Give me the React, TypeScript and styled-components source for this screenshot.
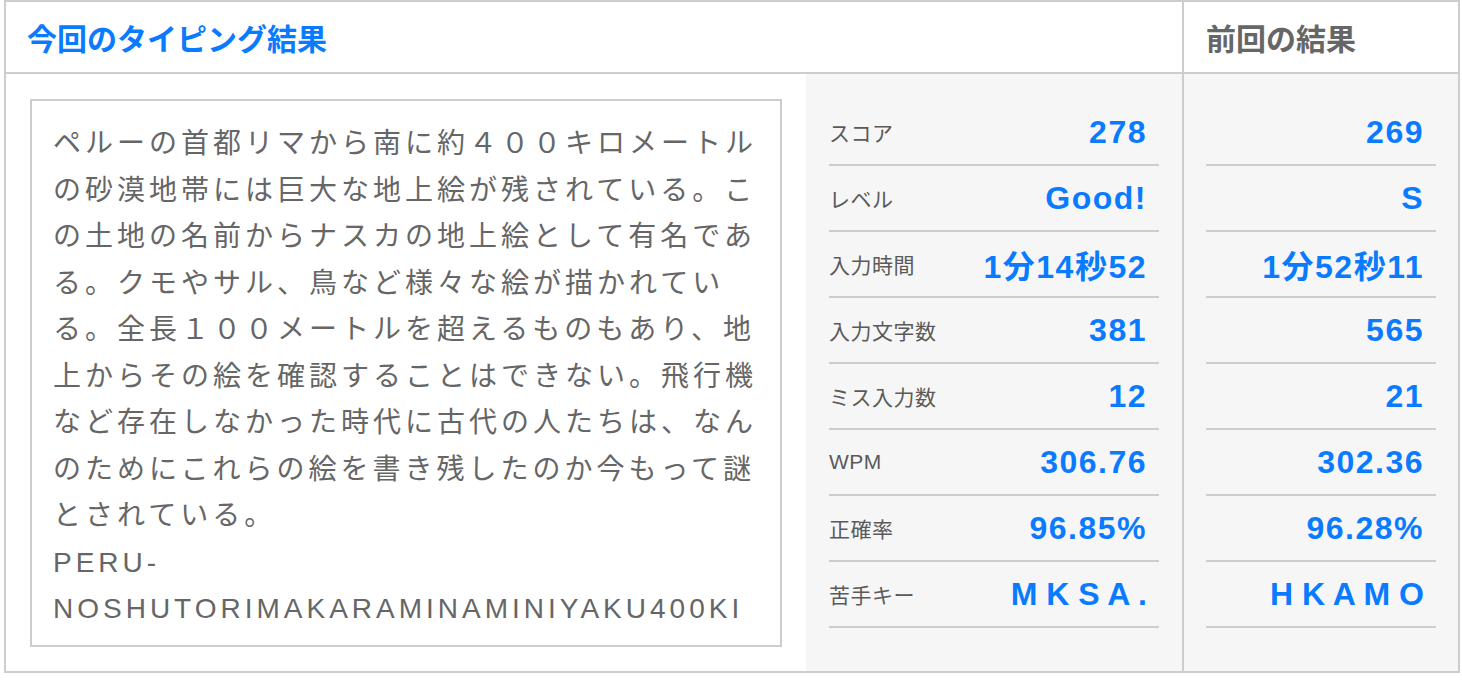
import React from "react";
import styled, { createGlobalStyle } from "styled-components";

const GlobalStyle = createGlobalStyle`
  html, body {
    margin: 0;
    padding: 0;
    background: #ffffff;
  }
  body {
    font-family: "Liberation Sans", "Noto Sans CJK JP", sans-serif;
  }
`;

const LINE = "#cdcdcd";
const BLUE = "#0a7bff";
const PANEL = "#f6f6f6";

const Frame = styled.div`
  box-sizing: border-box;
  width: 1456px;
  margin-left: 4px;
  border: 2px solid ${LINE};
  display: grid;
  grid-template-columns: 1178px 274px;
  grid-template-rows: 72px 597px;
`;

const HeaderCell = styled.div<{ $muted?: boolean; $divider?: boolean }>`
  display: flex;
  align-items: center;
  padding-left: ${(p) => (p.$muted ? 22 : 21)}px;
  border-bottom: 2px solid ${LINE};
  border-right: ${(p) => (p.$divider ? `2px solid ${LINE}` : "none")};
  font-family: "Noto Sans CJK JP", sans-serif;
  font-weight: 700;
  font-size: 30px;
  color: ${(p) => (p.$muted ? "#666666" : BLUE)};
`;

const BodyLeft = styled.div`
  display: flex;
  min-width: 0;
  border-right: 2px solid ${LINE};
`;

const TextPane = styled.div`
  flex: none;
  width: 800px;
  min-width: 0;
  box-sizing: border-box;
  padding: 25px 24px 24px 24px;
  background: #ffffff;
`;

const TextBox = styled.div`
  box-sizing: border-box;
  width: 752px;
  height: 548px;
  border: 2px solid ${LINE};
  background: #ffffff;
  padding: 20px 20px 20px 21px;
  overflow: hidden;
  font-family: "Liberation Sans", "Noto Sans CJK JP", sans-serif;
  font-size: 28px;
  letter-spacing: 4px;
  line-height: 46.5px;
  color: #666666;
  overflow-wrap: anywhere;
`;

const StatsPane = styled.div<{ $prev?: boolean }>`
  flex: 1;
  min-width: 0;
  box-sizing: border-box;
  background: ${PANEL};
  padding: 26px ${(p) => (p.$prev ? 22 : 23)}px 0;
  display: flex;
  flex-direction: column;
`;

const StatRow = styled.div`
  box-sizing: border-box;
  height: 66px;
  flex: none;
  display: flex;
  align-items: center;
  justify-content: space-between;
  border-bottom: 2px solid ${LINE};
  padding-right: 12px;
`;

const Label = styled.span`
  font-family: "Liberation Sans", "Noto Sans CJK JP", sans-serif;
  font-size: 21px;
  letter-spacing: 0.5px;
  color: #5a5a5a;
`;

const Value = styled.span<{ $keys?: boolean }>`
  margin-left: auto;
  font-family: "Liberation Sans", "Noto Sans CJK JP", sans-serif;
  font-weight: 700;
  font-size: 32px;
  letter-spacing: ${(p) => (p.$keys ? 0 : 1.5)}px;
  white-space: pre;
  color: ${BLUE};
`;

type Stat = { label: string; now: string; prev: string; keys?: boolean };

const stats: Stat[] = [
  { label: "スコア", now: "278", prev: "269" },
  { label: "レベル", now: "Good!", prev: "S" },
  { label: "入力時間", now: "1分14秒52", prev: "1分52秒11" },
  { label: "入力文字数", now: "381", prev: "565" },
  { label: "ミス入力数", now: "12", prev: "21" },
  { label: "WPM", now: "306.76", prev: "302.36" },
  { label: "正確率", now: "96.85%", prev: "96.28%" },
  { label: "苦手キー", now: "M K S A .", prev: "H K A M O", keys: true },
];

const passage =
  "ペルーの首都リマから南に約４００キロメートルの砂漠地帯には巨大な地上絵が残されている。この土地の名前からナスカの地上絵として有名である。クモやサル、鳥など様々な絵が描かれている。全長１００メートルを超えるものもあり、地上からその絵を確認することはできない。飛行機など存在しなかった時代に古代の人たちは、なんのためにこれらの絵を書き残したのか今もって謎とされている。";

const romaji =
  "PERU-NOSHUTORIMAKARAMINAMINIYAKU400KIROMETORUNOSABAKUCHITAINIHAKYODAINACHIJOUEGANOKOSARETEIRU.";

export default function App() {
  return (
    <>
      <GlobalStyle />
      <Frame>
        <HeaderCell $divider>今回のタイピング結果</HeaderCell>
        <HeaderCell $muted>前回の結果</HeaderCell>
        <BodyLeft>
          <TextPane>
            <TextBox>
              {passage}
              <br />
              {romaji}
            </TextBox>
          </TextPane>
          <StatsPane>
            {stats.map((s) => (
              <StatRow key={s.label}>
                <Label>{s.label}</Label>
                <Value $keys={s.keys}>{s.now}</Value>
              </StatRow>
            ))}
          </StatsPane>
        </BodyLeft>
        <StatsPane $prev>
          {stats.map((s) => (
            <StatRow key={s.label}>
              <Value $keys={s.keys}>{s.prev}</Value>
            </StatRow>
          ))}
        </StatsPane>
      </Frame>
    </>
  );
}
